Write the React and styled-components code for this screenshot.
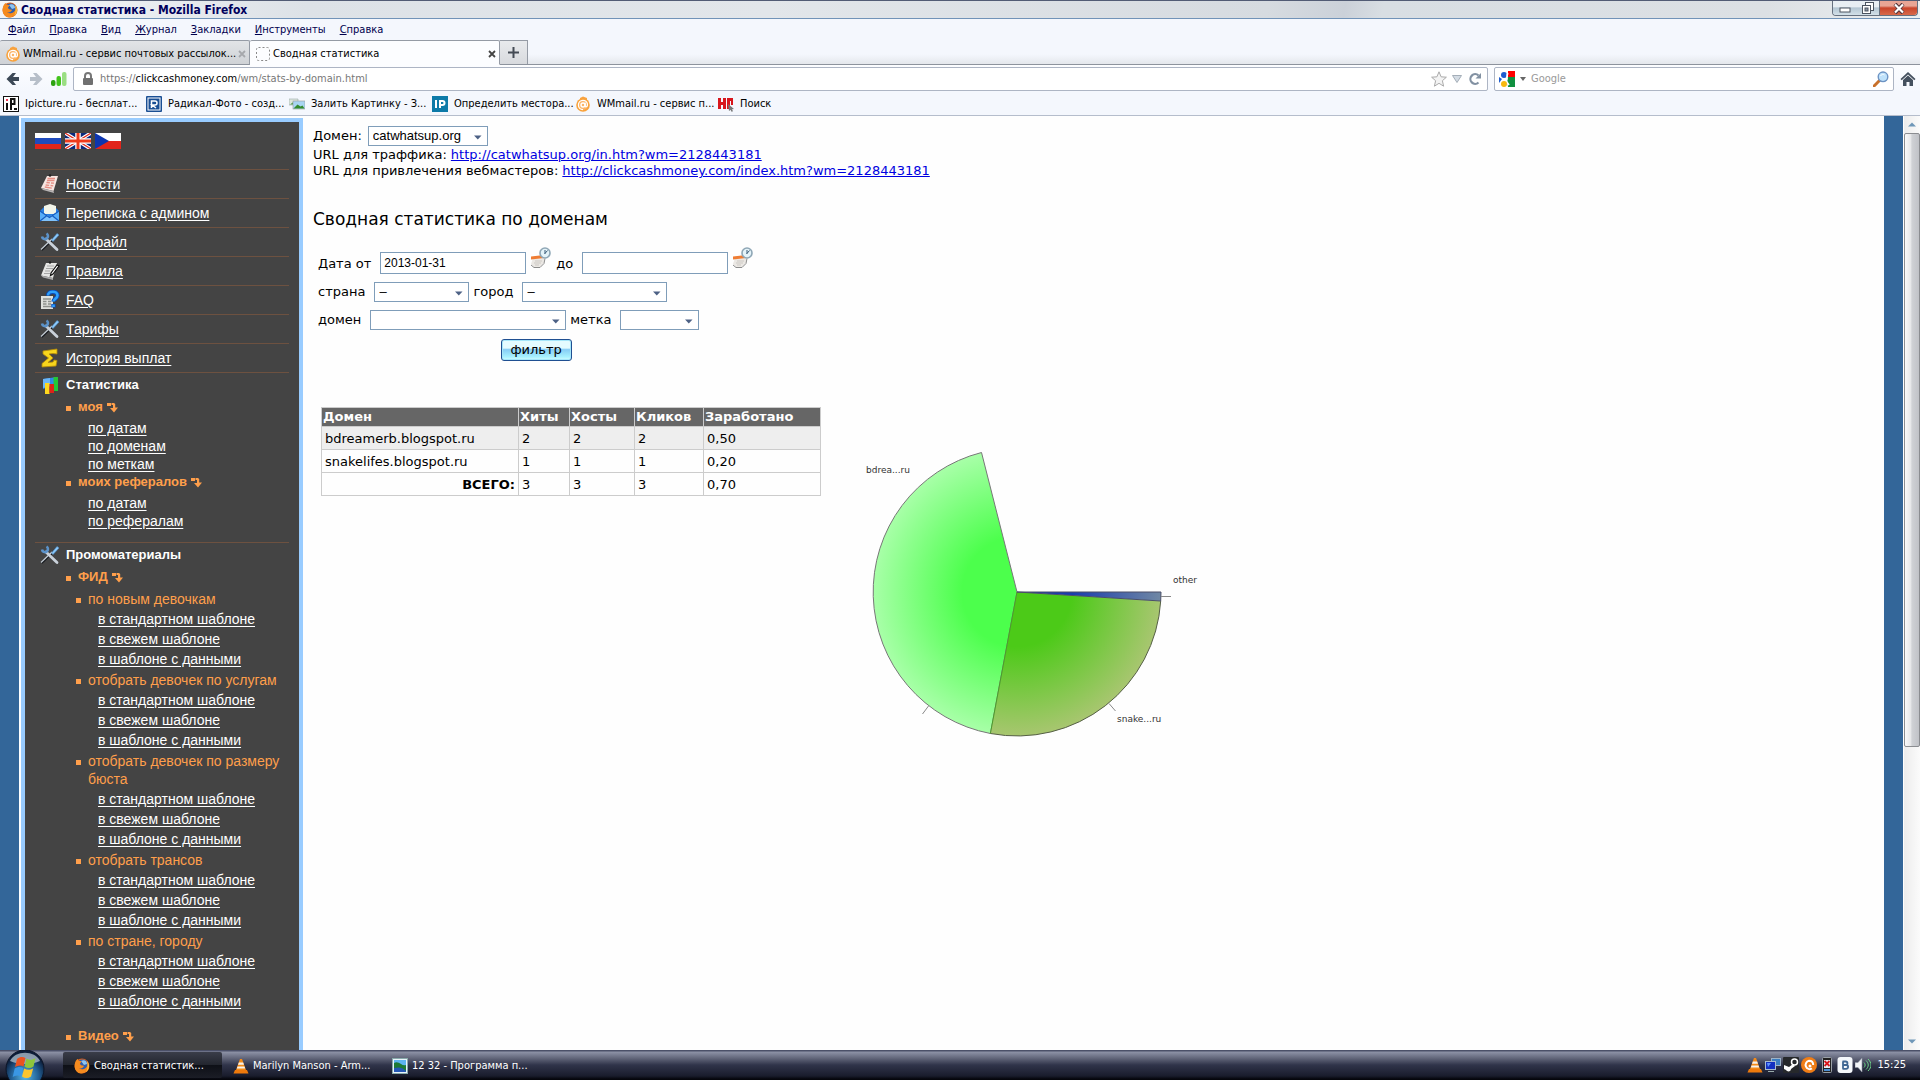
import React from "react";
import styled, { createGlobalStyle, css } from "styled-components";

const ui = '"DejaVu Sans Condensed", "Noto Sans", sans-serif';
const wide = '"DejaVu Sans", sans-serif';
const plain = '"Liberation Sans", Arial, sans-serif';

const GlobalStyle = createGlobalStyle`
  * { box-sizing: border-box; }
  html, body { margin: 0; height: 100%; overflow: hidden; }
  button, input, select { margin: 0; padding: 0; border: 0; background: none; color: inherit; font: inherit; }
  ul { list-style: none; margin: 0; padding: 0; }
  svg { display: block; flex: none; }
`;

const Window = styled.div`
  display: flex;
  flex-direction: column;
  height: 100vh;
  background: #f4f7fd;
  font: 12px/16px ${ui};
  color: #000;
  white-space: nowrap;
`;

/* ---------- browser chrome ---------- */

const TitleBar = styled.header`
  display: flex;
  align-items: center;
  flex: none;
  height: 19px;
  padding-left: 2px;
  gap: 3px;
  border-top: 1px solid #525c75;
  border-bottom: 1px solid #7193b8;
  background: linear-gradient(100deg, #f4f6f8 0%, #dde2e7 16%, #e2e6ea 40%, #d6dbe0 66%, #cbd1d9 70%, #d8dee3 72%, #dce0e4 92%, #eceff1 100%);
`;
const WindowTitle = styled.h1`
  flex: 1;
  margin: 0;
  font: bold 12px/16px ${ui};
  color: #00005c;
`;
const WindowButtons = styled.div`
  display: flex;
  align-self: flex-start;
  height: 15px;
  margin-right: 2px;
  border: 1px solid #66707f;
  border-top: 0;
  border-radius: 0 0 4px 4px;
  overflow: hidden;
`;
const WindowButton = styled.button`
  display: grid;
  place-items: center;
  width: ${(p) => (p.$close ? 38 : 23)}px;
  background: ${(p) =>
    p.$close
      ? "linear-gradient(#e9a595 0 35%, #c9452c 50%, #d8694a)"
      : "linear-gradient(#e8eef3 0 40%, #b4c6d3 50%, #d3e0e8)"};
  border-left: ${(p) => (p.$close ? "1px solid #66707f" : 0)};
`;
const MenuBar = styled.nav`
  display: flex;
  align-items: center;
  flex: none;
  gap: 14px;
  height: 21px;
  padding-left: 8px;
`;
const MenuButton = styled.button`
  font-size: 11px;
  color: #00004d;
  &::first-letter { text-decoration: underline; }
`;
const TabStrip = styled.div`
  display: flex;
  flex: none;
  height: 25px;
  border-bottom: 1px solid #8d939d;
  background: linear-gradient(#f4f7fd 60%, #e4e7ec);
`;
const Tab = styled.div`
  display: flex;
  align-items: center;
  gap: 2px;
  width: 250px;
  height: 25px;
  padding: 2px 3px 0 5px;
  border: 1px solid #959ba5;
  border-left-width: 0;
  border-bottom-color: ${(p) => (p.$active ? "#fcfdff" : "#8d939d")};
  border-radius: 2px 2px 0 0;
  background: ${(p) => (p.$active ? "#fcfdff" : "linear-gradient(#e2e4e7, #cfd2d6)")};
`;
const TabLabel = styled.button`
  flex: 1;
  text-align: left;
  font-size: 11px;
`;
const CloseTab = styled.button`
  display: grid;
  place-items: center;
  flex: none;
  width: 8px;
  height: 16px;
  color: ${(p) => (p.$active ? "#444" : "#a6a8ac")};
`;
const NewTab = styled.button`
  display: grid;
  place-items: center;
  width: 28px;
  height: 24px;
  border: 1px solid #959ba5;
  border-width: 1px 1px 0 0;
  background: linear-gradient(#e8eaed, #d8dade);
`;
const NavBar = styled.div`
  display: flex;
  align-items: center;
  flex: none;
  height: 27px;
  padding: 0 4px 0 5px;
  gap: 6px;
  background: linear-gradient(#fcfdff, #f4f7fd);
`;
const IconButton = styled.button`
  display: grid;
  place-items: center;
  width: 16px;
  height: 16px;
`;
const NavButtons = styled.div`
  display: flex;
  gap: 7px;
`;
const Field = styled.div`
  display: flex;
  align-items: center;
  height: 24px;
  gap: ${(p) => (p.$search ? 5 : 2)}px;
  padding: 0 4px 0 ${(p) => (p.$search ? 4 : 8)}px;
  border: 1px solid #adb5c4;
  border-radius: 2px;
  background: #fff;
  flex: ${(p) => (p.$search ? "0 0 400px" : 1)};
`;
const Address = styled.div`
  flex: 1;
  padding-left: 4px;
  font-size: 11px;
  color: #777;
  b { font-weight: normal; color: #000; }
`;
const SearchInput = styled.input`
  flex: 1;
  font-size: 11px;
  outline: 0;
  &::placeholder { color: #999; opacity: 1; }
`;
const Bookmarks = styled.nav`
  display: flex;
  align-items: center;
  flex: none;
  height: 24px;
  padding-left: 3px;
  border-bottom: 1px solid #b5bdcc;
`;
const Bookmark = styled.button`
  display: flex;
  align-items: center;
  gap: 6px;
  width: 143px;
  font-size: 11px;
`;

/* ---------- page ---------- */

const Page = styled.div`
  display: flex;
  flex: 1;
  min-height: 0;
  overflow: hidden;
  background: #fefefe;
`;
const Edge = styled.div`
  flex: 0 0 19px;
  background: #336699;
`;
const Sidebar = styled.aside`
  flex: 0 0 282px;
  align-self: flex-start;
  margin: 2px 0 0 2px;
  padding: 11px 10px 40px;
  border: 4px solid #99ccff;
  background: #444;
  color: #fff;
  font: 14px/18px ${plain};
`;
const Flags = styled.div`
  display: flex;
  gap: 4px;
  margin-bottom: 20px;
`;
const Flag = styled.button`
  width: 26px;
  height: 16px;
`;
const SideItem = styled.div`
  display: flex;
  align-items: center;
  height: ${(p) => (p.$head ? 24 : 29)}px;
  gap: 6px;
  padding-left: 5px;
  border-top: 1px solid #6d5140;
  font: ${(p) => (p.$head ? `bold 13px/18px ${plain}` : "inherit")};
`;
const SideLink = styled.a`
  color: #fff;
  text-decoration: underline;
  text-underline-offset: 2px;
`;
const Group = styled.ul`
  padding: 2px 0 12px 31px;
`;
const GroupItem = styled.li`
  margin-top: ${(p) => (p.$spaced ? 17 : 0)}px;
`;
const marker = css`
  display: flex;
  color: #ff9f4b;
  &::before {
    content: "";
    flex: none;
    width: 5px;
    height: 5px;
    margin: 8px 7px 0 0;
    background: #ff9f4b;
  }
`;
const GroupTitle = styled.div`
  ${marker}
  font: bold 13px/18px ${plain};
  svg { margin: 4px 0 0 4px; }
`;
const SubLinks = styled.ul`
  padding: 3px 0 0 22px;
`;
const Category = styled.li`
  margin-top: 3px;
`;
const CategoryTitle = styled.div`
  ${marker}
  white-space: normal;
`;
const Categories = styled.ul`
  padding: 1px 0 0 10px;
`;
const CategoryLinks = styled.ul`
  padding-left: 22px;
  li { margin-top: 2px; }
`;

const Main = styled.main`
  flex: 1;
  min-width: 0;
  padding: 10px;
  font: 13px/16px ${wide};
`;
const DomainRow = styled.div`
  display: flex;
  align-items: center;
  gap: 6px;
  margin-bottom: 1px;
`;
const UrlLine = styled.p`
  display: flex;
  gap: 4px;
  margin: 0;
  a { color: #0000e0; }
`;
const Heading = styled.h2`
  margin: 28px 0 16px;
  font: 17px/24px ${wide};
`;
const Filter = styled.form`
  display: flex;
  flex-direction: column;
  gap: 8px;
  width: fit-content;
  margin: 0 0 46px 5px;
`;
const FilterRow = styled.div`
  display: flex;
  align-items: flex-end;
  gap: 4px;
  label { margin-right: 5px; line-height: 20px; }
`;
const DateInput = styled.input`
  width: 146px;
  height: 22px;
  padding: 0 3px;
  border: 1px solid #7f9db9;
  background: #fff;
  font: 12px/16px ${plain};
`;
const CalendarButton = styled.button`
  align-self: flex-start;
  width: 22px;
  height: 27px;
  padding-bottom: 5px;
`;
const SelectBox = styled.span`
  display: grid;
  align-items: center;
  width: ${(p) => p.$width}px;
  height: 20px;
  border: 1px solid #7f9db9;
  background: #fff;
  select, svg { grid-area: 1 / 1; }
  svg { justify-self: end; margin: 2px 5px 0 0; pointer-events: none; }
  select {
    appearance: none;
    width: 100%;
    height: 18px;
    padding: 0 4px;
    font: 13px/18px ${plain};
  }
`;
const SubmitButton = styled.button`
  align-self: center;
  width: 71px;
  height: 22px;
  margin-top: 1px;
  border: 1px solid #1f4f91;
  border-radius: 3px;
  box-shadow: inset 0 0 0 1px #a5e6fa;
  background: linear-gradient(#e4fbff 0 40%, #86cdf5 48%, #a8f2ff 85%, #d6fdff);
`;
const Results = styled.div`
  display: flex;
  align-items: flex-start;
  margin-left: 8px;
`;
const Table = styled.table`
  width: 500px;
  table-layout: fixed;
  border-collapse: collapse;
  th, td { border: 1px solid #ccc; text-align: left; }
  thead th { height: 19px; padding: 0 1px; background: #666; color: #fff; line-height: 18px; }
  td, tfoot th { height: 23px; padding: 1px 3px 0; }
  tfoot th { text-align: right; }
  tbody tr:first-child td { background: #eee; }
`;
const Pie = styled.svg`
  width: 400px;
  height: 360px;
  margin-left: 19px;
  font: 9px ${wide};
`;

const Scroll = styled.div`
  display: flex;
  flex-direction: column;
  flex: 0 0 16px;
  margin-left: 1px;
  background: linear-gradient(90deg, #ececec, #fbfbfb);
`;
const ScrollButton = styled.button`
  display: grid;
  place-items: center;
  height: 17px;
`;
const ScrollTrack = styled.div`
  flex: 1;
`;
const Thumb = styled.div`
  height: 68.2%;
  border: 1px solid #8b8d91;
  border-radius: 2px;
  background: linear-gradient(90deg, #fafafa, #e7e8ea 40%, #cfd1d5 50%, #c0c2c7);
`;

/* ---------- taskbar ---------- */

const Taskbar = styled.footer`
  display: flex;
  align-items: center;
  flex: none;
  height: 30px;
  padding: 0 14px 0 5px;
  background: linear-gradient(#4b5068 0 1px, #8d92a6 2px, #5c6074 9px, #30344a 15px, #191c2c 26px, #05060c 29px);
  color: #fff;
  font-size: 11px;
`;
const StartButton = styled.button`
  width: 40px;
  height: 30px;
  margin-right: 18px;
`;
const Task = styled.button`
  display: flex;
  align-items: center;
  gap: 4px;
  width: 159px;
  height: 26px;
  padding: 1px 0 0 11px;
  border-radius: 2px;
  background: ${(p) => (p.$active ? "linear-gradient(#3a3d49, #23262f 48%, #0e1017 52%, #1b1d26)" : "none")};
`;
const Tray = styled.div`
  display: flex;
  align-items: center;
  gap: 2px;
  margin-left: auto;
`;
const Clock = styled.time`
  margin-left: 4px;
`;

/* ---------- drawings ---------- */

const Svg = ({ size = 16, w, h, box = "0 0 16 16", children }) => (
  <svg width={w || size} height={h || size} viewBox={box} aria-hidden="true">{children}</svg>
);

const Firefox = () => (
  <Svg>
    <circle cx="8" cy="8" r="7.5" fill="#d9601a" />
    <circle cx="8.6" cy="6.4" r="5" fill="#2e5fae" />
    <path d="M7 3c3-2 6 0 6 3l-3 1z" fill="#8fc4ef" />
    <path d="M1 5c1-3 2-4 3-4 0 2 1 2 3 2 1 1-1 2-1 3 1 2 3 1 4 2-1 2-3 3-5 2 3 3 8 1 9-4 1 7-3 9.500-7 9.500S-.5 11 1 5z" fill="#f58b1f" />
    <path d="M13 3c3 3 2.500 9-1 11 2-3 2-7 1-11z" fill="#fdc944" />
  </Svg>
);
const Mail = () => (
  <Svg>
    <path d="M5 2l3-1.500L12 2v3H5z" fill="#f7a444" />
    <circle cx="8" cy="9" r="6.800" fill="#f9a23b" />
    <circle cx="8" cy="9" r="5" fill="#fbb469" />
    <circle cx="8" cy="9" r="2" fill="none" stroke="#fff" strokeWidth="1.400" />
    <path d="M10.200 6.500v3.500c0 1.500 2.300 1 2.300-1.200 0-3-2.200-4.500-4.600-4.500-2.600 0-4.500 2-4.500 4.700s2 4.600 4.600 4.600" fill="none" stroke="#fff" strokeWidth="1.200" />
  </Svg>
);
const Cross = () => (
  <Svg size={8} box="0 0 8 8"><path d="M1 1l6 6M7 1L1 7" stroke="currentColor" strokeWidth="1.800" /></Svg>
);
const Back = ({ dim }) => (
  <Svg>
    <path d="M7.500 2L1.500 8l6 6h3.500L8 10h6V6H8l3-4z" fill={dim ? "#b7bfc9" : "#3c4856"} transform={dim ? "translate(16 0) scale(-1 1)" : undefined} />
  </Svg>
);
const Bars = () => (
  <Svg>
    <rect x="0" y="9" width="4.500" height="6" rx="2" fill="#2da211" />
    <rect x="5.500" y="5" width="4.500" height="10" rx="2" fill="#43c41c" />
    <rect x="11" y="1" width="4.500" height="14" rx="2" fill="#9ade83" />
  </Svg>
);
const Lock = () => (
  <Svg w={12} h={14} box="0 0 12 14">
    <path d="M3 6V4a3 3 0 016 0v2" fill="none" stroke="#777" strokeWidth="2" />
    <rect x="1" y="6" width="10" height="7" rx="1" fill="#707070" />
  </Svg>
);
const Arrow = () => (
  <Svg w={8} h={5} box="0 0 8 5"><path d="M0 .5h7.500L3.800 4.500z" fill="#4d6185" /></Svg>
);
const Hook = () => (
  <Svg w={11} h={11} box="0 0 11 11">
    <path d="M0 1h4v3H0zM4.500 1H7l1.200 1v3.500H11L7 10.500 3 6h3V3H4.500z" fill="#ff9f4b" />
  </Svg>
);
const Cone = () => (
  <Svg>
    <path d="M7 1h2l4 11H3z" fill="#f48a17" />
    <path d="M5.800 4.500h4.400l.8 2.300H5zM4.500 8.500h7l.7 2H3.800z" fill="#f6f1ea" />
    <path d="M2 12h12l1.500 3.500H.5z" fill="#ee7a0c" />
  </Svg>
);

const RuFlag = () => (
  <Svg w={26} h={16} box="0 0 26 16">
    <rect width="26" height="16" fill="#fff" /><rect y="5" width="26" height="6" fill="#1f4bbd" /><rect y="11" width="26" height="5" fill="#e1251b" />
  </Svg>
);
const UkFlag = () => (
  <Svg w={26} h={16} box="0 0 26 16">
    <rect width="26" height="16" fill="#0b2a7c" />
    <path d="M0 0l26 16M26 0L0 16" stroke="#fff" strokeWidth="3.600" />
    <path d="M0 0l26 16M26 0L0 16" stroke="#e22a1c" strokeWidth="1.200" />
    <path d="M13 0v16M0 8h26" stroke="#fff" strokeWidth="5.500" />
    <path d="M13 0v16M0 8h26" stroke="#ee3a1c" strokeWidth="3" />
  </Svg>
);
const CzFlag = () => (
  <Svg w={26} h={16} box="0 0 26 16">
    <rect width="26" height="8" fill="#fff" /><rect y="8" width="26" height="8" fill="#e1251b" /><path d="M0 0l14 8L0 16z" fill="#0d35b0" />
  </Svg>
);

const NewsIcon = () => (
  <Svg size={20} box="0 0 20 20">
    <path d="M7 2l11 0-4.500 15L1 14z" fill="#f6e6e2" /><path d="M1 14l12.500 3 .5 2L3 16z" fill="#b8b4b4" />
    <path d="M7.500 4.500h7.500M7 6.500h7.500M6.400 8.500l3.500.3M11 9l3 .2M5.600 11l3.600.3M10.500 11.500l2.700.3M4.800 13l7 1.200" stroke="#e58e84" strokeWidth="1.300" />
    <circle cx="10" cy="1.500" r="1.300" fill="#222" />
  </Svg>
);
const EnvelopeIcon = () => (
  <Svg size={20} box="0 0 20 20">
    <path d="M0 8l4-4h11l4 4v10H0z" fill="#2b7fe0" /><path d="M4 3l6-2 6 2v8H4z" fill="#f2f5ea" />
    <path d="M0 8l9.500 6L19 8v10H0z" fill="#58adf8" /><path d="M0 18l7.500-6L9.500 14l2-2L19 18z" fill="#7fc2fc" /><path d="M0 8l9.500 6.500L19 8M0 18l7-5.500M19 18l-7-5.500" fill="none" stroke="#155cc0" strokeWidth="1.200" />
  </Svg>
);
const ToolsIcon = () => (
  <Svg size={20} box="0 0 20 20">
    <path d="M1.500 18L12 8" stroke="#14171c" strokeWidth="2.400" /><path d="M1 17.500L12 7" stroke="#c8d0d8" strokeWidth="1.200" />
    <path d="M11.500 8l5.500-6.500 2 1.500L13 9.500z" fill="#8cc8f8" stroke="#4b8fce" strokeWidth=".6" />
    <path d="M6 7l11 10.500" stroke="#c9d1da" strokeWidth="2.800" strokeLinecap="round" />
    <path d="M2 4.500A3 3 0 106.500 1.500" fill="none" stroke="#5c93ca" strokeWidth="2.600" />
  </Svg>
);
const RulesIcon = () => (
  <Svg size={20} box="0 0 20 20">
    <path d="M6 2l11 0-4 15L1 14.500z" fill="#e6e6e4" /><path d="M1 14.500l12 2.500v2L3 16.500z" fill="#a9a9a9" />
    <path d="M7 5h7M6 7.500h7M5 10h5M4 12.500h6" stroke="#a5a5a5" />
    <path d="M19 5l-6 8-2.500 1.500L11 12l6-8z" fill="#fff" stroke="#111" strokeWidth="1.200" /><circle cx="10" cy="1.500" r="1.200" fill="#222" />
  </Svg>
);
const FaqIcon = () => (
  <Svg size={20} box="0 0 20 20">
    <rect x="1" y="6" width="12" height="13" fill="#dfe1dc" /><path d="M3 9h8M3 11.500h3.500M8 11.500h3M3 14h3.500M8 14h3M3 16.500h8" stroke="#8e918c" strokeWidth="1.300" />
    <path d="M8 5.500c0-5 9.500-5 9.500 0 0 3-4 3.500-4 6M13.500 14v3.500" fill="none" stroke="#0a49b6" strokeWidth="4.400" /><path d="M8 5.500c0-5 9.500-5 9.500 0 0 3-4 3.500-4 6M13.500 14.500v2.500" fill="none" stroke="#2ea0fb" strokeWidth="2.600" />
  </Svg>
);
const SumIcon = () => (
  <Svg size={20} box="0 0 20 20">
    <path d="M3 3l14-2v5l-4-.5L9 6l4 4-5 4.500 5-.5 1-2 3 .5-1 5.500-14 1v-3.500L8.500 10 3 6z" fill="#f7d51c" stroke="#b58a08" strokeWidth=".8" />
  </Svg>
);
const ChartIcon = () => (
  <Svg size={20} box="0 0 20 20">
    <path d="M3 4l14-2v7l-14 5z" fill="#2f8ce8" /><path d="M3 4l7-1v8l-7 2z" fill="#6bb6f7" />
    <rect x="13.500" y="2" width="4.500" height="14" fill="#22c835" /><rect x="5" y="8" width="4.500" height="11" fill="#ffd81e" /><rect x="9.500" y="9" width="4.500" height="9" fill="#dd2418" />
  </Svg>
);
const CalendarIcon = () => (
  <Svg w={22} h={22} box="0 0 22 22">
    <path d="M3 11l12-2-1 7-4 4H4l-3-3z" fill="#ebe8e4" /><path d="M1 9.500L14 8v3L1 12.500z" fill="#ef7d34" />
    <path d="M5 14h7M4 16h7M5 18h4" stroke="#cdc9c4" /><path d="M1 18l3 2.500h6l4-4 1-5" fill="none" stroke="#8d8d8d" />
    <circle cx="15" cy="6" r="5" fill="#e4f3f9" stroke="#8fa7b6" strokeWidth="1.600" /><path d="M14.500 7l3-3.500M15 3v3.500" stroke="#395b77" />
  </Svg>
);

const menu = ["Файл", "Правка", "Вид", "Журнал", "Закладки", "Инструменты", "Справка"];

const bookmarks = [
  ["Ipicture.ru - бесплат...", (
    <Svg><rect x=".5" y=".5" width="15" height="15" fill="#fff" stroke="#111" /><path d="M4 7v7M8 14V3h3.500v5H8" fill="none" stroke="#111" strokeWidth="2" /><path d="M3 3h2v2H3z" fill="#e35" /><path d="M11 12h3v2h-3z" fill="#111" /></Svg>
  )],
  ["Радикал-Фото - созд...", (
    <Svg><rect width="16" height="16" rx="1" fill="#1a4f94" /><rect x="2" y="2" width="12" height="12" fill="none" stroke="#fff" /><path d="M5.500 12V5h3.500a2 2 0 010 4H6l4 3" fill="none" stroke="#fff" strokeWidth="1.500" /></Svg>
  )],
  ["Залить Картинку - З...", (
    <Svg><path d="M0 3h9v6H0z" fill="#dfe7de" stroke="#9aa" strokeWidth=".6" /><path d="M1 8.500l4-3 3 3z" fill="#4b9b45" /><rect x="4" y="5" width="12" height="8" fill="#a8d4f2" stroke="#999" strokeWidth=".6" /><path d="M4.500 12.500l4-4 3 2 2-1 2 3z" fill="#348b2d" /></Svg>
  )],
  ["Определить местора...", (
    <Svg><rect width="16" height="16" fill="#0d7aa8" /><path d="M4 4v8M8 12V5h2.500a1.800 1.800 0 010 4H8" fill="none" stroke="#fff" strokeWidth="2" /></Svg>
  )],
  ["WMmail.ru - сервис п...", <Mail />],
  ["Поиск", (
    <Svg><path d="M0 2h3v4h2V2h3v11H5V9H3v4H0zM9 2h6v7h-2V5h-1v8H9z" fill="#d8161c" /><path d="M10 8l6 5-2 .3 1 2-1.500.5-1-2-1.500 1.200z" fill="#777" /></Svg>
  )],
];

const sections = [
  ["Новости", NewsIcon],
  ["Переписка с админом", EnvelopeIcon],
  ["Профайл", ToolsIcon],
  ["Правила", RulesIcon],
  ["FAQ", FaqIcon],
  ["Тарифы", ToolsIcon],
  ["История выплат", SumIcon],
];

const stats = [
  ["моя", ["по датам", "по доменам", "по меткам"]],
  ["моих рефералов", ["по датам", "по рефералам"]],
];

const categories = [
  "по новым девочкам",
  "отобрать девочек по услугам",
  "отобрать девочек по размеру бюста",
  "отобрать трансов",
  "по стране, городу",
];
const templates = ["в стандартном шаблоне", "в свежем шаблоне", "в шаблоне с данными"];

const rows = [
  ["bdreamerb.blogspot.ru", "2", "2", "2", "0,50"],
  ["snakelifes.blogspot.ru", "1", "1", "1", "0,20"],
];

function Dropdown({ id, width, value }) {
  return (
    <SelectBox $width={width}>
      <select id={id} defaultValue={value}>
        <option>{value}</option>
      </select>
      <Arrow />
    </SelectBox>
  );
}

function PieChart() {
  return (
    <Pie viewBox="840 407 400 360" role="img" aria-label="Доли доменов">
      <defs>
        <radialGradient id="lime" gradientUnits="userSpaceOnUse" cx="1017" cy="592" r="144">
          <stop offset=".38" stopColor="#4cff4c" /><stop offset="1" stopColor="#a8ffa8" />
        </radialGradient>
        <radialGradient id="olive" gradientUnits="userSpaceOnUse" cx="1017" cy="592" r="144">
          <stop offset=".38" stopColor="#4cca18" /><stop offset="1" stopColor="#a8c670" />
        </radialGradient>
        <radialGradient id="navy" gradientUnits="userSpaceOnUse" cx="1017" cy="592" r="144">
          <stop offset=".38" stopColor="#1a3cae" /><stop offset="1" stopColor="#7088a4" />
        </radialGradient>
      </defs>
      <path d="M1017 592L990.400 733.500A144 144 0 01981.500 452.500z" fill="url(#lime)" stroke="#777" />
      <path d="M1017 592L1160.700 601A144 144 0 01990.400 733.500z" fill="url(#olive)" />
      <path d="M1160.700 601A144 144 0 01990.400 733.500" fill="none" stroke="#555f45" />
      <path d="M1017 592L990.400 733.500" stroke="#4b9c2c" />
      <path d="M1017 592H1161L1160.700 601z" fill="url(#navy)" stroke="#4a4f68" />
      <path d="M1161 596.500h10M1109 703.500l6.500 7.500M928.500 706l-6 8" stroke="#888" />
      <g fill="#333">
        <text x="866" y="473">bdrea...ru</text>
        <text x="1173" y="583">other</text>
        <text x="1117" y="722">snake...ru</text>
      </g>
    </Pie>
  );
}

function Chrome() {
  return (
    <>
      <TitleBar>
        <Firefox />
        <WindowTitle>Сводная статистика - Mozilla Firefox</WindowTitle>
        <WindowButtons>
          <WindowButton aria-label="Свернуть">
            <Svg w={12} h={12} box="0 0 12 12"><rect x="1" y="6" width="10" height="4" fill="#fff" stroke="#4c5460" /></Svg>
          </WindowButton>
          <WindowButton aria-label="Восстановить">
            <Svg w={12} h={12} box="0 0 12 12"><rect x="3.500" y=".5" width="8" height="8" fill="#fff" stroke="#4c5460" /><rect x=".5" y="3.500" width="8" height="8" fill="#fff" stroke="#4c5460" /><rect x="3" y="6" width="3" height="3" fill="#8a96a4" stroke="#4c5460" /></Svg>
          </WindowButton>
          <WindowButton $close aria-label="Закрыть">
            <Svg w={12} h={11} box="0 0 12 11"><path d="M2 1l8 9M10 1l-8 9" stroke="#54343a" strokeWidth="4" /><path d="M2 1.500l8 8M10 1.500l-8 8" stroke="#fff" strokeWidth="2.200" /></Svg>
          </WindowButton>
        </WindowButtons>
      </TitleBar>
      <MenuBar>
        {menu.map((name) => <MenuButton key={name}>{name}</MenuButton>)}
      </MenuBar>
      <TabStrip>
        <Tab>
          <Mail />
          <TabLabel>WMmail.ru - сервис почтовых рассылок...</TabLabel>
          <CloseTab aria-label="Закрыть вкладку"><Cross /></CloseTab>
        </Tab>
        <Tab $active>
          <Svg><rect x="1.500" y="1.500" width="13" height="13" rx="2" fill="none" stroke="#8a8a8a" strokeDasharray="2 2" /></Svg>
          <TabLabel>Сводная статистика</TabLabel>
          <CloseTab $active aria-label="Закрыть вкладку"><Cross /></CloseTab>
        </Tab>
        <NewTab aria-label="Новая вкладка">
          <Svg size={11} box="0 0 11 11"><path d="M5.500 0v11M0 5.500h11" stroke="#444b55" strokeWidth="2" /></Svg>
        </NewTab>
      </TabStrip>
      <NavBar>
        <NavButtons>
          <IconButton aria-label="Назад"><Back /></IconButton>
          <IconButton aria-label="Вперёд"><Back dim /></IconButton>
          <IconButton aria-label="Рейтинг"><Bars /></IconButton>
        </NavButtons>
        <Field>
          <Lock />
          <Address>https://<b>clickcashmoney.com</b>/wm/stats-by-domain.html</Address>
          <IconButton aria-label="Добавить в закладки">
            <Svg><path d="M8 .8l2.100 5 5.300.4-4 3.500 1.200 5.500L8 12.300l-4.600 2.900 1.200-5.500-4-3.500 5.300-.4z" fill="#f3f3f3" stroke="#aaa" /></Svg>
          </IconButton>
          <IconButton aria-label="История адресов">
            <Svg><path d="M3.500 4.500h9L8 11.500z" fill="#d4dce4" stroke="#a4aeb8" /></Svg>
          </IconButton>
          <IconButton aria-label="Обновить">
            <Svg><path d="M11.500 11.500a4.800 4.800 0 110-7" fill="none" stroke="#8291a2" strokeWidth="2.200" /><path d="M8.500 7.500H14V2z" fill="#8291a2" /></Svg>
          </IconButton>
        </Field>
        <Field $search>
          <Svg>
            <rect width="16" height="16" rx="1" fill="#fff" /><path d="M9 0h7v6H9z" fill="#f00" /><path d="M8 6h8v10H9z" fill="#109040" /><path d="M0 6l3 2-3 4z" fill="#1c5bd0" />
            <circle cx="5" cy="4" r="3" fill="#1c5bd0" /><path d="M9 2c-3 3 1 5-2 8l3 4" fill="none" stroke="#fff" strokeWidth="1.800" /><circle cx="5" cy="13" r="3" fill="#f7b80e" />
          </Svg>
          <Svg w={6} h={4} box="0 0 6 4"><path d="M0 0h6L3 4z" fill="#666" /></Svg>
          <SearchInput aria-label="Поиск" placeholder="Google" />
          <IconButton aria-label="Искать">
            <Svg><path d="M1 15l6-6" stroke="#c8702a" strokeWidth="3" strokeLinecap="round" /><circle cx="10" cy="5.800" r="4.800" fill="#bfe2fb" stroke="#6c93c4" strokeWidth="1.400" /><path d="M7.500 5c1-2 3-2 4-1" stroke="#fff" fill="none" /></Svg>
          </IconButton>
        </Field>
        <IconButton aria-label="Домой">
          <Svg><path d="M8 1l7.500 7-1.200 1.200L8 3.500 1.700 9.200.5 8z" fill="#44505e" /><path d="M3 9l5-4.500L13 9v6H9.500v-4h-3v4H3z" fill="#44505e" /></Svg>
        </IconButton>
      </NavBar>
      <Bookmarks>
        {bookmarks.map(([name, icon]) => <Bookmark key={name}>{icon}{name}</Bookmark>)}
      </Bookmarks>
    </>
  );
}

function SideMenu() {
  return (
    <Sidebar>
      <Flags>
        <Flag aria-label="Русский"><RuFlag /></Flag>
        <Flag aria-label="English"><UkFlag /></Flag>
        <Flag aria-label="Čeština"><CzFlag /></Flag>
      </Flags>
      {sections.map(([name, Icon]) => (
        <SideItem key={name}><Icon /><SideLink href="#">{name}</SideLink></SideItem>
      ))}
      <SideItem $head><ChartIcon />Статистика</SideItem>
      <Group>
        {stats.map(([title, links]) => (
          <GroupItem key={title}>
            <GroupTitle>{title}<Hook /></GroupTitle>
            <SubLinks>
              {links.map((l) => <li key={l}><SideLink href="#">{l}</SideLink></li>)}
            </SubLinks>
          </GroupItem>
        ))}
      </Group>
      <SideItem $head><ToolsIcon />Промоматериалы</SideItem>
      <Group>
        <GroupItem>
          <GroupTitle>ФИД<Hook /></GroupTitle>
          <Categories>
            {categories.map((c) => (
              <Category key={c}>
                <CategoryTitle>{c}</CategoryTitle>
                <CategoryLinks>
                  {templates.map((t) => <li key={t}><SideLink href="#">{t}</SideLink></li>)}
                </CategoryLinks>
              </Category>
            ))}
          </Categories>
        </GroupItem>
        <GroupItem $spaced>
          <GroupTitle>Видео<Hook /></GroupTitle>
        </GroupItem>
      </Group>
    </Sidebar>
  );
}

function Stats() {
  return (
    <Main>
      <DomainRow>
        <label htmlFor="site">Домен:</label>
        <Dropdown id="site" width={120} value="catwhatsup.org" />
      </DomainRow>
      <UrlLine>URL для траффика: <a href="#in">http://catwhatsup.org/in.htm?wm=2128443181</a></UrlLine>
      <UrlLine>URL для привлечения вебмастеров: <a href="#index">http://clickcashmoney.com/index.htm?wm=2128443181</a></UrlLine>
      <Heading>Сводная статистика по доменам</Heading>
      <Filter onSubmit={(e) => e.preventDefault()}>
        <FilterRow>
          <label htmlFor="from">Дата от</label>
          <DateInput id="from" defaultValue="2013-01-31" />
          <CalendarButton type="button" aria-label="Выбрать начало"><CalendarIcon /></CalendarButton>
          <label htmlFor="to">до</label>
          <DateInput id="to" />
          <CalendarButton type="button" aria-label="Выбрать конец"><CalendarIcon /></CalendarButton>
        </FilterRow>
        <FilterRow>
          <label htmlFor="country">страна</label>
          <Dropdown id="country" width={95} value="–" />
          <label htmlFor="city">город</label>
          <Dropdown id="city" width={145} value="–" />
        </FilterRow>
        <FilterRow>
          <label htmlFor="domain">домен</label>
          <Dropdown id="domain" width={196} value="" />
          <label htmlFor="mark">метка</label>
          <Dropdown id="mark" width={79} value="" />
        </FilterRow>
        <SubmitButton type="submit">фильтр</SubmitButton>
      </Filter>
      <Results>
        <Table>
          <colgroup>
            <col width="197" /><col width="51" /><col width="65" /><col width="69" /><col />
          </colgroup>
          <thead>
            <tr>{["Домен", "Хиты", "Хосты", "Кликов", "Заработано"].map((h) => <th key={h} scope="col">{h}</th>)}</tr>
          </thead>
          <tbody>
            {rows.map((r) => (
              <tr key={r[0]}>{r.map((c, i) => <td key={i}>{c}</td>)}</tr>
            ))}
          </tbody>
          <tfoot>
            <tr><th scope="row">ВСЕГО:</th><td>3</td><td>3</td><td>3</td><td>0,70</td></tr>
          </tfoot>
        </Table>
        <PieChart />
      </Results>
    </Main>
  );
}

export default function App() {
  return (
    <Window>
      <GlobalStyle />
      <Chrome />
      <Page>
        <Edge />
        <SideMenu />
        <Stats />
        <Edge />
        <Scroll>
          <ScrollButton aria-label="Вверх"><Svg w={8} h={5} box="0 0 8 5"><path d="M0 4.500h8L4 .5z" fill="#6f97b8" /></Svg></ScrollButton>
          <ScrollTrack><Thumb /></ScrollTrack>
          <ScrollButton aria-label="Вниз"><Svg w={8} h={5} box="0 0 8 5"><path d="M0 .5h8L4 4.500z" fill="#6f97b8" /></Svg></ScrollButton>
        </Scroll>
      </Page>
      <Taskbar>
        <StartButton aria-label="Пуск">
          <Svg w={40} h={30} box="0 0 40 30">
            <defs><radialGradient id="orb" cx=".5" cy=".7" r=".6"><stop offset="0" stopColor="#58b9e8" /><stop offset=".6" stopColor="#225f94" /><stop offset="1" stopColor="#0c1c38" /></radialGradient></defs>
            <circle cx="20" cy="19" r="19" fill="url(#orb)" stroke="#0b1426" />
            <path d="M5 11C10 0 30 0 35 11c-8 4-22 4-30 0z" fill="#b4c3cf" opacity=".75" />
            <path d="M12 9c3-2.500 6-2.500 8.500-1L18.500 16.500c-3-2-6-1-8.500.5z" fill="#ea5320" />
            <path d="M21.500 8.500c3 2 6 1.500 9-.5l-2 8.500c-3 2-6 2-9 0z" fill="#8ec63b" />
            <path d="M9.700 18.500c3-2 6-2 8.500-.5L16 26.500c-3-2-6-1-8.300.5z" fill="#3a97e4" />
            <path d="M19.200 18.500c3 2 6 1.500 9-.3L26 26.500c-3 2-6 2-9 0z" fill="#fbc52d" />
          </Svg>
        </StartButton>
        <Task $active><Firefox />Сводная статистик...</Task>
        <Task><Cone />Marilyn Manson - Arm...</Task>
        <Task>
          <Svg><rect x=".5" y=".5" width="15" height="15" fill="#e9f4fb" stroke="#8aa" /><rect x="2" y="2" width="12" height="12" fill="#5cb4f0" /><path d="M2 5c5-3 8 4 12 2v7H2z" fill="#1d7a35" /><path d="M2 10c5-1 8-1 12 3v1H2z" fill="#2458b5" /></Svg>
          12 32 - Программа п...
        </Task>
        <Tray>
          <Cone />
          <Svg><rect x="6.500" y="1.500" width="9" height="7" fill="#3c7ec0" stroke="#9db3c8" /><rect x=".5" y="4.500" width="10" height="8" fill="#1330c0" stroke="#a8bccf" /><path d="M2 6h4l-3 4z" fill="#5f95ff" /><path d="M3 14.500h6" stroke="#9aa" /></Svg>
          <Svg><rect width="16" height="16" rx="1" fill="#26282b" /><circle cx="11.500" cy="5" r="3" fill="none" stroke="#fff" strokeWidth="1.500" /><path d="M1 8l5 2 4-3 2 2-4 3c0 3-4 3-5 1l-2-1z" fill="#fff" /></Svg>
          <Svg><circle cx="8" cy="8" r="8" fill="#ef7d16" /><path d="M11 11.500A4.200 4.200 0 118 3.800c2.500 0 4.200 1.700 4.200 4.200" fill="none" stroke="#fff" strokeWidth="2" /><circle cx="9" cy="9" r="1.500" fill="#fff" /></Svg>
          <Svg><rect x="3.500" y=".5" width="9" height="15" rx="1" fill="#222" stroke="#9aa1a8" /><rect x="5" y="3" width="6" height="8" fill="#e8eef5" /><path d="M5.500 4l5 5M10.500 4l-5 5" stroke="#d8161c" strokeWidth="1.800" /><path d="M5 12h6v2H5z" fill="#4c8fd4" /></Svg>
          <Svg><rect x=".5" width="15" height="16" rx="3" fill="#f5f8fb" /><path d="M5.500 4.500h3.200a1.700 1.700 0 010 3.500H5.500m0 0h3.700a1.800 1.800 0 010 3.800H5.500M6 4.500v7.300" fill="none" stroke="#3f6793" strokeWidth="1.800" /></Svg>
          <Svg><path d="M0 5.500h3L7 1v14L3 10.500H0z" fill="#f2f4f7" stroke="#8a92a0" strokeWidth=".6" /><path d="M9 5.500c1.500 1.500 1.500 3.500 0 5M11 3.500c3 3 3 6 0 9M13 2c4 4 4 8 0 12" fill="none" stroke="#6fd489" /></Svg>
          <Clock>15:25</Clock>
        </Tray>
      </Taskbar>
    </Window>
  );
}
